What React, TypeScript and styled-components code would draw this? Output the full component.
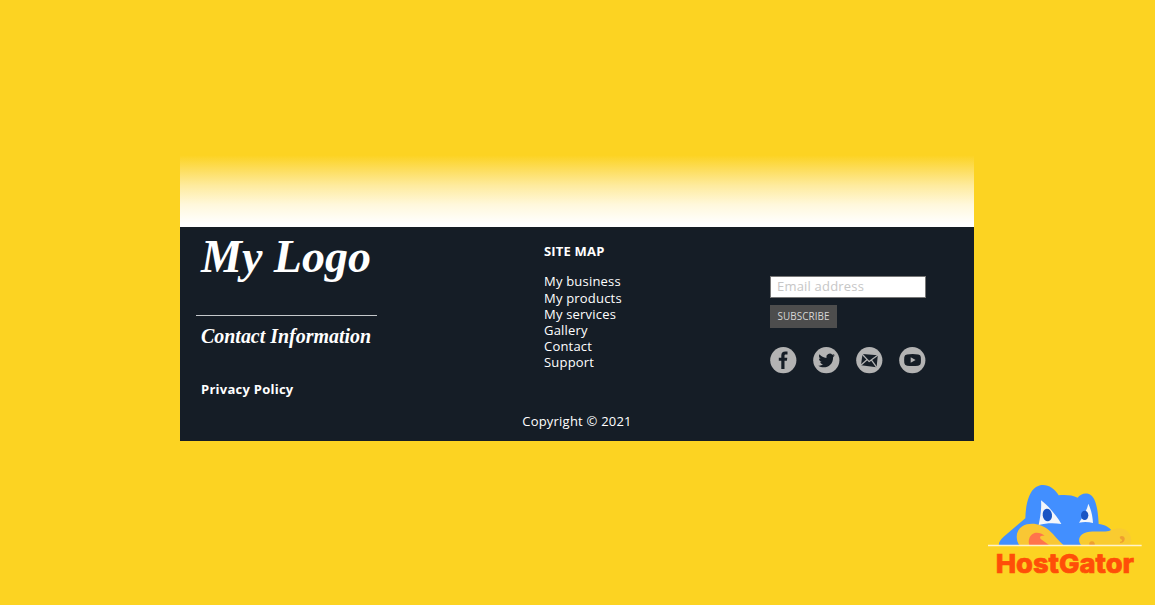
import React from 'react';
import styled, { createGlobalStyle } from 'styled-components';

const GlobalStyle = createGlobalStyle`
  * { box-sizing: border-box; }
  body { margin: 0; background: #fcd322; font-family: "Open Sans", sans-serif; }
`;

const Page = styled.div`
  display: flex;
  flex-direction: column;
  width: 1155px;
  height: 605px;
  padding-top: 153px;
  overflow: hidden;
  background: #fcd322;
`;

const Preview = styled.main`
  width: 794px;
  margin-left: 180px;
`;

const Fade = styled.div`
  height: 74px;
  background: linear-gradient(#fcd322 3%, #fddc55 20%, #feeb9e 44%, #fff8dc 70%, #ffffff 96%);
`;

const Footer = styled.footer`
  height: 214px;
  background: #151d26;
  color: #fff;
  font-size: 13px;
  line-height: 16.2px;
`;

const Columns = styled.div`
  display: grid;
  grid-template-columns: 348px 226px 156px;
  height: 184px;
  padding-left: 16px;
`;

const Brand = styled.section`
  display: flex;
  flex-direction: column;
  width: 181px;
`;

const Script = styled.svg<{ $height: number }>`
  display: block;
  width: 181px;
  height: ${(p) => p.$height}px;
  overflow: visible;
  fill: #fff;
  font-family: "Liberation Serif", serif;
  font-style: italic;
  font-weight: 700;
`;

const Rule = styled.hr`
  width: 181px;
  height: 1px;
  margin: 0;
  border: 0;
  background: #c4c8cb;
`;

const Privacy = styled.a`
  margin: 27px 0 0 5px;
  font-weight: 700;
  letter-spacing: 0.25px;
`;

const SiteMap = styled.nav`
  padding-top: 16px;
`;

const Heading = styled.h2`
  margin: 0 0 13.48px;
  font-size: 13px;
  line-height: 17px;
  font-weight: 700;
  letter-spacing: 0.18px;
`;

const Links = styled.ul`
  margin: 0;
  padding: 0;
  list-style: none;
  line-height: 16.12px;
  letter-spacing: 0.2px;
`;

const Subscribe = styled.form`
  display: flex;
  flex-direction: column;
  align-items: flex-start;
  padding-top: 49px;
`;

const Email = styled.input`
  width: 156px;
  height: 22px;
  padding: 0 6px 2px;
  border: 1px solid #777;
  background: #fff;
  font: 13px "Open Sans", sans-serif;
  letter-spacing: 0.2px;
  outline: 0;
  &::placeholder { color: #c6c6c6; opacity: 1; }
`;

const Button = styled.button`
  width: 67px;
  height: 23px;
  margin-top: 7px;
  padding: 0 0 1px;
  border: 0;
  background: #4d4d4d;
  color: #d6d6d6;
  font: 9.9px "Open Sans", sans-serif;
  letter-spacing: 0.1px;
`;

const Socials = styled.div`
  display: flex;
  justify-content: space-between;
  width: 156px;
  margin-top: 19px;
`;

const Badge = styled.svg`
  display: block;
  width: 27px;
  height: 27px;
`;

const Copyright = styled.p`
  margin: 0;
  padding-top: 2px;
  text-align: center;
  letter-spacing: 0.22px;
`;

const HostLogo = styled.svg`
  flex: none;
  width: 170px;
  height: 110px;
  margin: 34px 5px 0 auto;
`;

const pages = ['My business', 'My products', 'My services', 'Gallery', 'Contact', 'Support'];

const Social = ({ children }: { children: React.ReactNode }) => (
  <Badge viewBox="0 0 27 27">
    <circle cx="13.3" cy="13.2" r="13.1" fill="#b3b3b3" />
    {children}
  </Badge>
);

export default function App() {
  return (
    <Page>
      <GlobalStyle />
      <Preview>
        <Fade />
        <Footer>
          <Columns>
            <Brand>
              <Script $height={88} viewBox="0 0 181 88">
                <text x="5" y="45" fontSize="46" textLength="170" lengthAdjust="spacingAndGlyphs">My Logo</text>
              </Script>
              <Rule />
              <Script $height={38} viewBox="0 0 181 38">
                <text x="5" y="27" fontSize="22" textLength="170" lengthAdjust="spacingAndGlyphs">Contact Information</text>
              </Script>
              <Privacy>Privacy Policy</Privacy>
            </Brand>
            <SiteMap>
              <Heading>SITE MAP</Heading>
              <Links>{pages.map((page) => <li key={page}>{page}</li>)}</Links>
            </SiteMap>
            <Subscribe>
              <Email placeholder="Email address" />
              <Button type="button">SUBSCRIBE</Button>
              <Socials>
                <Social>
                  <path fill="#151d26" d="M11.3 22v-8.2H8.8v-3.1h2.5V8.6c0-2.8 1.3-4.1 4-4.1h2.2v3h-1.6c-1.1 0-1.4.5-1.4 1.4v1.8h2.8l-.4 3.1h-2.4V22z" />
                </Social>
                <Social>
                  <path fill="#151d26" d="M21.8 8.2c-.6.3-1.2.4-1.8.5.7-.4 1.2-1 1.4-1.8-.6.4-1.3.6-2.1.8a3.5 3.5 0 0 0-5.9 3.2c-2.8-.1-5.2-1.4-6.9-3.6-1 1.7-.4 3.6 1.1 4.6-.6 0-1.1-.2-1.6-.4 0 1.7 1.1 3 2.7 3.4-.5.1-1 .1-1.5 0 .5 1.4 1.7 2.3 3.1 2.4a7 7 0 0 1-5 1.4c6.2 4 14.8.4 14.8-8.3v-.5c.7-.5 1.2-1 1.7-1.7z" />
                </Social>
                <Social>
                  <g fill="#151d26" stroke="#b3b3b3" strokeWidth="1.3" strokeLinejoin="round">
                    <path stroke="none" d="M6.5 7 21.8 8.3 20.6 20.2 5 18.2z" />
                    <path fill="none" d="M6 7l7.2 7.6 8.8-6.5M4.8 18.3l6.2-5.5M20.7 20.3l-5-7" />
                  </g>
                </Social>
                <Social>
                  <path fill="#151d26" d="M8 7.4q5.6-.7 11.2 0 2.5.2 2.6 2.7.3 3 0 6-.1 2.4-2.6 2.6-5.6.6-11.2 0-2.5-.2-2.7-2.6-.3-3 0-6Q5.5 7.6 8 7.4z" />
                  <path fill="#b3b3b3" d="m11.7 10.2 4.9 2.8-4.9 2.8z" />
                </Social>
              </Socials>
            </Subscribe>
          </Columns>
          <Copyright>Copyright © 2021</Copyright>
        </Footer>
      </Preview>
      <HostLogo viewBox="0 0 510 330">
        <path fill="#428fff" d="M57 211c-2-8 4-17 14-26l65-55c1-38 9-79 32-94 23-14 52-3 68 25 18-2 41-1 57 7 8-11 25-17 39-8 18 13 22 51 24 87 16 2 31 8 38 19l-20 45z" />
        <path fill="#f3f6fa" d="M183 76c21 15 48 47 61 71-22-3-45-3-68 3 5-24 9-49 7-74zM325 86c8 17 13 38 14 58-13-3-26-4-42-1 13-18 23-36 28-57z" />
        <ellipse cx="202" cy="120" rx="14" ry="19" fill="#1955c4" transform="rotate(-8 202 120)" />
        <ellipse cx="314" cy="121" rx="11" ry="14" fill="#1955c4" />
        <path fill="#f9c734" d="M118 211c-13-20-10-46 9-57 24-14 58-7 80 12 16 14 27 30 44 45z" />
        <path fill="#ff744c" d="M148 211c-5-17 2-33 16-37 9-2 22 0 30 9-13-2-16 4-12 9l26 19z" />
        <path fill="#f9cb30" d="M304 211c-12-12-7-29 8-36 23-10 51-2 75-7 25-14 53-11 63 11 4 10 5 22 0 32z" />
        <path fill="#ef9f30" d="M328 211c-2-8 2-12 8-12s10 5 8 12zM419 186c5-5 13-3 15 4 1 8-5 14-12 14-3-1-3-4-1-4 5-1 6-4 5-6-3 0-6-3-7-8z" />
        <path stroke="#fff4cc" strokeWidth="4" d="M24 211.5h461" />
        <text x="47" y="293" textLength="415" lengthAdjust="spacingAndGlyphs" fontFamily="Inter" fontWeight="800" fontSize="79" fill="#ff4e08" stroke="#ff4e08" strokeWidth="2">HostGator</text>
      </HostLogo>
    </Page>
  );
}
